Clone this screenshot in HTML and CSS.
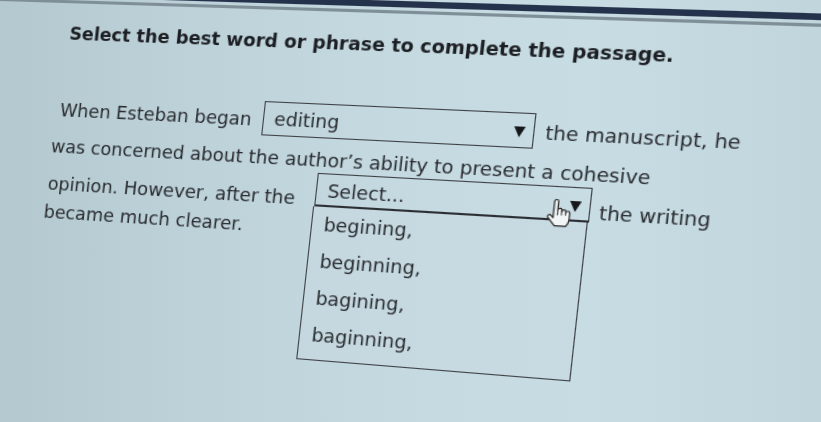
FILE: index.html
```html
<!DOCTYPE html>
<html>
<head>
<meta charset="utf-8">
<link rel="stylesheet" href="styles.css">
</head>
<body>
<div class="screen">
  <div class="topbar">
    <div class="bar-dark"></div>
    <div class="bar-gray"></div>
  </div>
  <h1 class="title">Select the best word or phrase to complete the passage.</h1>
  <div class="passage">
    <div class="row row1">
      <span class="txt first">When Esteban began</span>
      <div class="dd dd-closed"><span class="dd-val">editing</span><span class="arrow"></span></div>
      <span class="txt">the manuscript, he</span>
    </div>
    <div class="row row2">
      <span class="txt">was concerned about the author’s ability to present a cohesive</span>
    </div>
    <div class="row row3">
      <span class="txt lead">opinion. However, after the</span>
      <div class="dd dd-open"><span class="dd-val">Select...</span><span class="arrow"></span>
        <svg class="hand" viewBox="0 0 19 23" width="22" height="27">
          <path d="M6,13 V2.6 a1.5,1.5 0 0 1 3,0 V9.5 a1.5,1.5 0 0 1 3,0 V10.5 a1.5,1.5 0 0 1 3,0 V11.5 a1.5,1.5 0 0 1 3,0 V16.5 q0,3 -2,5.5 H7.5 L2.2,15.8 a1.4,1.4 0 0 1 2.2,-1.9 L6,15.6 Z" fill="#f2f5f6" stroke="#2a2a2a" stroke-width="1" stroke-linejoin="round"/>
          <path d="M9,9.5 V13.5 M12,10.5 V13.5 M15,11.5 V13.5" stroke="#2a2a2a" stroke-width="0.8" fill="none"/>
        </svg>
        <ul class="list">
          <li>begining,</li>
          <li>beginning,</li>
          <li>bagining,</li>
          <li>baginning,</li>
        </ul>
      </div>
      <span class="txt trail">the writing</span>
    </div>
    <div class="row row4">
      <span class="txt">became much clearer.</span>
    </div>
  </div>
</div>
</body>
</html>
```
FILE: styles.css
```css
html, body {
  margin: 0;
  padding: 0;
  overflow: hidden;
  width: 821px;
  height: 422px;
}
html {
  background: linear-gradient(to right, #b4c8cf 0%, #bdd1d9 22%, #c5d9e1 48%, #c8dce4 72%, #c1d5dd 100%);
}
.screen {
  width: 900px;
  height: 440px;
  margin-top: -16px;
  transform-origin: 0 16px;
  transform: rotate(1.8deg) skewX(-4.5deg) perspective(940px) rotateY(-8deg);
  font-family: "DejaVu Sans", Verdana, sans-serif;
  color: #282b2f;
  filter: blur(0.35px);
}
.topbar {
  height: 18px;
  display: flex;
  flex-direction: column;
}
.bar-dark {
  margin-top: 5px;
  height: 6px;
  background: #25324b;
}
.bar-gray {
  margin-top: 3px;
  height: 3px;
  background: #7f8f98;
}
.title {
  margin: 19px 0 0 73px;
  font-size: 17.1px;
  line-height: 20px;
  font-weight: bold;
  color: #1b1e22;
}
.passage {
  margin-top: 48px;
  padding-left: 67px;
}
.row {
  display: flex;
  align-items: flex-start;
}
.txt {
  font-size: 17.3px;
  line-height: 22px;
  white-space: nowrap;
}
.first {
  padding-left: 5px;
}
.row1 {
  height: 33px;
}
.row1 .txt {
  padding-top: 7px;
}
.row2 {
  margin-top: 10px;
  height: 23px;
}
.row3 {
  height: 32px;
}
.row3 .lead {
  padding: 14px 0 0 1px;
}
.row3 .trail {
  padding-top: 12px;
}
.row4 {
  margin-top: 10px;
  height: 22px;
}
.dd {
  position: relative;
  box-sizing: border-box;
  width: 244px;
  border: 1.5px solid #3b3e42;
  padding: 5px 0 0 10px;
}
.dd-closed {
  height: 33px;
  margin: 0 10px;
}
.dd-open {
  width: 243px;
  height: 32px;
  margin: 0 8px 0 18px;
  border-bottom: 2px solid #2c2f33;
}
.dd-val {
  display: block;
  font-size: 17.3px;
  line-height: 22px;
}
.arrow {
  position: absolute;
  right: 7px;
  top: 11.5px;
  width: 0;
  height: 0;
  border-left: 5.5px solid transparent;
  border-right: 5.5px solid transparent;
  border-top: 10px solid #15171a;
}
.hand {
  position: absolute;
  left: 204px;
  top: 9.5px;
  z-index: 2;
}
.list {
  position: absolute;
  left: -1.5px;
  top: calc(100% + 2px);
  width: 243px;
  box-sizing: border-box;
  margin: 0;
  padding: 0 0 4.5px 0;
  list-style: none;
  border: 1.5px solid #3b3e42;
  border-top: none;
  background: rgba(200, 218, 226, 0.5);
}
.list li {
  height: 35px;
  line-height: 35px;
  padding-left: 10.5px;
  font-size: 17.3px;
}
```
